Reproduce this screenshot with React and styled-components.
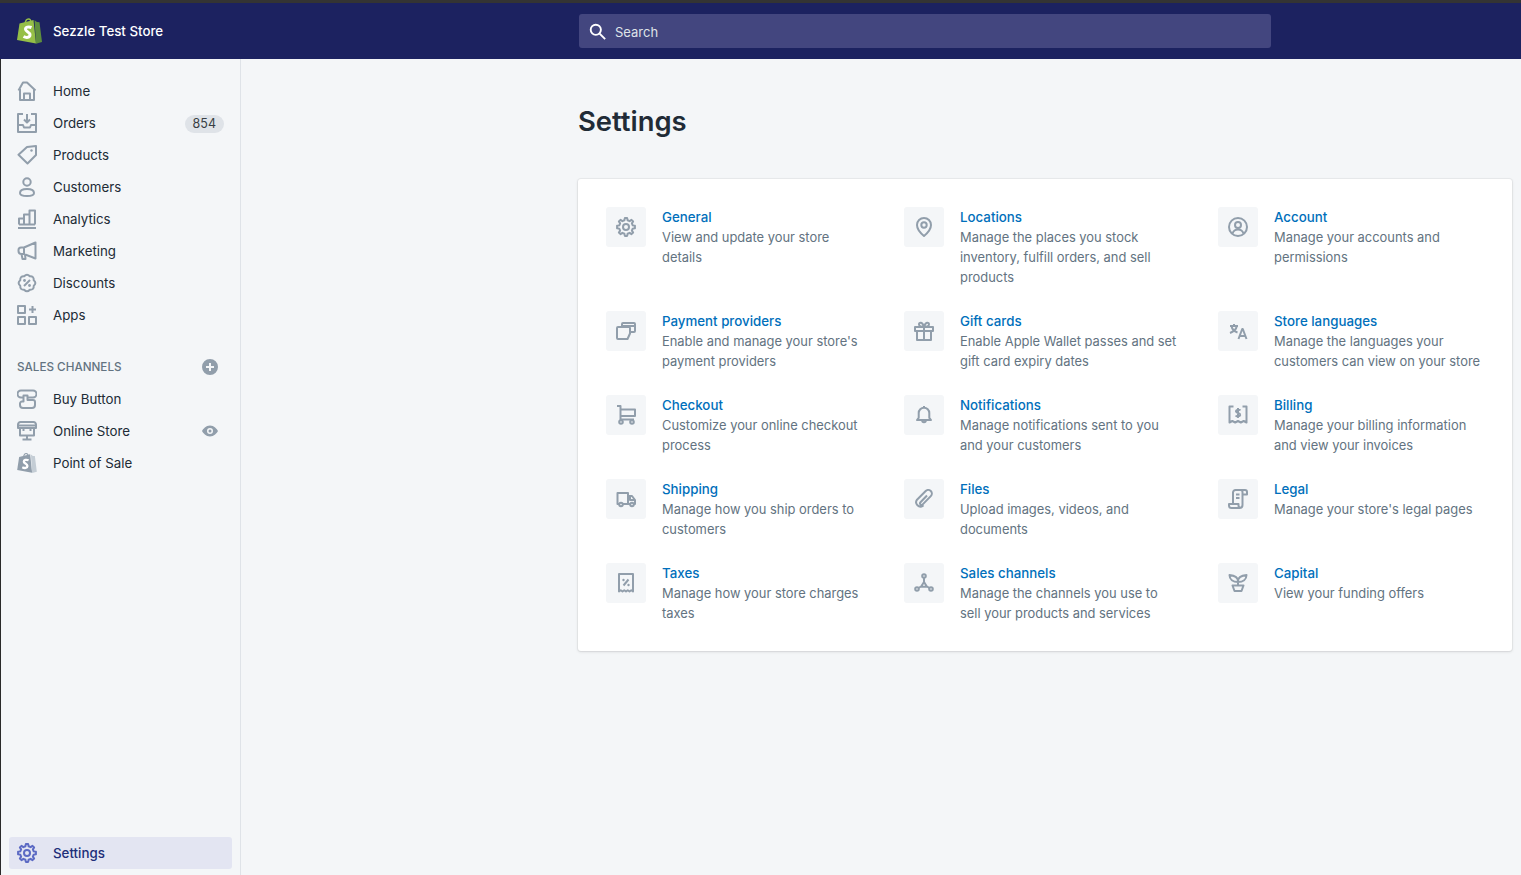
import React from "react";
import styled, { createGlobalStyle } from "styled-components";

const GlobalStyle = createGlobalStyle`
  html, body {
    margin: 0;
    height: 100%;
    overflow: hidden;
    background: #f4f6f8;
  }
  body {
    font-family: Inter, "Noto Sans", "Liberation Sans", sans-serif;
    font-size: 13.3px;
    line-height: 20px;
    color: #212b36;
  }
  * { box-sizing: border-box; }
`;

const ring = (count, outer, inner, spread) => {
  const pts = [];
  const step = (Math.PI * 2) / count;
  for (let i = 0; i < count; i++) {
    const a = i * step - Math.PI / 2;
    [[-spread, inner], [-spread * 0.55, outer], [spread * 0.55, outer], [spread, inner]].forEach(([d, r]) => {
      pts.push(`${(10 + Math.cos(a + d * step) * r).toFixed(2)} ${(10 + Math.sin(a + d * step) * r).toFixed(2)}`);
    });
  }
  return `M${pts.join("L")}Z`;
};

// wavy outline of the discount badge
const wavy = (count, outer, inner) => {
  const step = (Math.PI * 2) / count;
  const at = (a, r) => `${(10 + Math.cos(a) * r).toFixed(2)} ${(10 + Math.sin(a) * r).toFixed(2)}`;
  let d = `M${at(-Math.PI / 2 - step / 2, inner)}`;
  for (let i = 0; i < count; i++) {
    const a = i * step - Math.PI / 2;
    d += `Q${at(a, outer + 1.2)} ${at(a + step / 2, inner)}`;
  }
  return `${d}Z`;
};

const ICONS = {
  home: <path d="M1.500 9.500 6 1.500h4l8.500 8M3 8v11h14V8M7 19v-6.500h6V19" />,
  orders: <path d="M6 1H1v18h18V1h-5M10 1v8.500M7 6.500l3 3 3-3M1 12h5l1 2.500h6l1-2.500h5" />,
  products: (
    <>
      <path d="M1.500 9.800 10 2l9-1v9l-8.500 8.500z" />
      <circle cx="14.500" cy="5.500" r="1.200" fill="currentColor" stroke="none" />
    </>
  ),
  customers: (
    <>
      <circle cx="10" cy="5" r="3.700" />
      <path d="M3 16c0-2.600 3-4 7-4s7 1.400 7 4c0 2-2.500 3-7 3s-7-1-7-3z" />
    </>
  ),
  analytics: <path d="M1 19h18M2 15.500V9.500h5v6M7 15.500v-10h5.500v10M12.500 15.500V1.500H18v14M2 15.500h16" />,
  marketing: <path d="M18.500 1.500 7 6.500H4Q1.500 6.500 1.500 9v1Q1.500 13 4.500 13H7l11.500 4.500zM7 6.500V13M4.500 13l1 5h3L8 13.500" />,
  discounts: (
    <>
      <path d={wavy(8, 8.800, 7.300)} />
      <path d="M13 7l-6 6" />
      <circle cx="7.500" cy="7.500" r="1.400" fill="currentColor" stroke="none" />
      <circle cx="12.500" cy="12.500" r="1.400" fill="currentColor" stroke="none" />
    </>
  ),
  apps: <path d="M1 1h7v7H1zM1 12h7v7H1zM12 12h7v7h-7zM15.500 1v7M12 4.500h7" />,
  buyButton: <path d="M6.500 8.500H4a3.500 3.500 0 0 1 0-7h12a3.500 3.500 0 0 1 0 7h-5.500v2.500H16a2 2 0 0 1 2 2V16a3 3 0 0 1-3 3H6a3 3 0 0 1-3-3v-1.500a2 2 0 0 1 2-2h1.500V6.500h4v2" />,
  store: <path d="M1 7V3.500A2.500 2.500 0 0 1 3.500 1h13A2.500 2.500 0 0 1 19 3.500V7zM3 7v7.500h14V7M1 4.500h18M6.500 7V10M13.500 7V10M10 14.500v3.500M5.500 18.500h9" />,
  gear: (
    <>
      <path d={ring(8, 9, 6.900, 0.3)} />
      <circle cx="10" cy="10" r="3" />
    </>
  ),
  payment: <path d="M6 6V3A1 1 0 0 1 7 2h11a1 1 0 0 1 1 1v7a1 1 0 0 1-1 1h-4M6 6h7a1 1 0 0 1 1 1v5.500L11.500 18H2a1 1 0 0 1-1-1V7a1 1 0 0 1 1-1zM7 5h12" />,
  checkout: (
    <>
      <path d="M1 1h3.500v13.500H18M4.500 4.500H19V11H4.500" />
      <circle cx="5" cy="17" r="1.800" />
      <circle cx="16" cy="17" r="1.800" />
    </>
  ),
  shipping: (
    <>
      <path d="M3 15H1.500V4h10.500v11H7M12 7h4l3 4v4h-1M12 15h2M14 7v4h5" />
      <circle cx="5" cy="15.500" r="1.800" />
      <circle cx="16" cy="15.500" r="1.800" />
    </>
  ),
  taxes: (
    <>
      <path d="M3 1h14v17.500l-1.750-1.200-1.750 1.200-1.750-1.200-1.750 1.200-1.750-1.200-1.750 1.200-1.750-1.200L3 18.500z" />
      <path d="M12.500 6.500l-5 6" />
      <circle cx="7.500" cy="7" r="1.200" fill="currentColor" stroke="none" />
      <circle cx="12.500" cy="12" r="1.200" fill="currentColor" stroke="none" />
    </>
  ),
  location: (
    <>
      <path d="M10 1a7 7 0 0 1 7 7c0 4.500-4 8.500-7 11-3-2.500-7-6.500-7-11a7 7 0 0 1 7-7z" />
      <circle cx="10" cy="8" r="2.700" />
    </>
  ),
  gift: <path d="M1 6h18v4H1zM3 10v9h14v-9M10 6v13M10 6C7 6 5 5 5 3.300 5 1.300 8.500.500 10 6c1.500-5.500 5-4.700 5-2.700C15 5 13 6 10 6z" />,
  bell: <path d="M3 15h14l-1.700-2.200V8a5.300 5.300 0 0 0-10.600 0v4.800zM10 1v1.700M8.200 15.500a1.800 1.800 0 0 0 3.600 0" />,
  clip: <path d="M13 6.500l-6.500 6.800a1.500 1.500 0 0 0 2.200 2.100l8.100-8.300a3.600 3.600 0 0 0-5.100-5.100L3 10.700a4.300 4.300 0 0 0 6 6l.5-.5" />,
  channels: (
    <>
      <circle cx="10" cy="3" r="1.800" />
      <circle cx="3" cy="16" r="1.800" />
      <circle cx="17" cy="16" r="1.800" />
      <path d="M10 5v4M7 13.500l-2.500 1.500M13 13.500l2.500 1.500M10 9l3 4.800H7z" />
    </>
  ),
  account: (
    <>
      <circle cx="10" cy="10" r="9" />
      <circle cx="10" cy="8" r="3" />
      <path d="M4.500 16.500c1-3 3-4 5.500-4s4.500 1 5.500 4" />
    </>
  ),
  languages: <path d="M2 5h8M6 3v2M3.500 5c.5 3 3 5.500 6 6.500M8.800 5C8.300 8 6 10.500 2 12M10.500 18l3.700-10h.6l3.700 10M11.800 15h5.400" />,
  billing: <path d="M5.500 1.500H1.500v16l2.800-1.500 2.900 1.500 2.800-1.500 2.800 1.500 2.900-1.500 2.800 1.500v-16h-4M12.300 5.500c-.5-1-3.800-1.300-4.300.5-.500 2.300 4.500 1.700 4.200 4-.3 1.800-3.800 1.700-4.500.500M10 3v10" />,
  legal: <path d="M5 15V3.500A2.500 2.500 0 0 1 7.500 1H17a2 2 0 0 1 2 2v2.500h-4.500V3a2 2 0 0 0-2-2M14.500 5.500V16a3 3 0 0 1-3 3H3.500A2.500 2.500 0 0 1 1 16.500V15h9.500v1.500a2.500 2.500 0 0 0 2 2.500M8 5.500h3.500M8 9h3.500" />,
  capital: <path d="M10 12.500V8C10 4.500 6 2.500 1.500 2c0 4.500 3.500 7 8.500 7s8.500-2.500 8.500-7C14 2.500 10 4.500 10 8M4.500 12.500h11L13.500 18h-7z" />,
};

const Svg = styled.svg`
  display: block;
  width: ${(p) => p.$size || 20}px;
  height: ${(p) => p.$size || 20}px;
  flex: none;
  fill: none;
  stroke: currentColor;
  stroke-width: ${(p) => p.$weight || 2};
  stroke-linejoin: round;
  color: ${(p) => p.$color || "#919eab"};
`;

const Icon = ({ name, color, weight }) => (
  <Svg viewBox="0 0 20 20" $color={color} $weight={weight}>
    {ICONS[name]}
  </Svg>
);

const ShopBag = ({ plain }) => (
  <svg width={plain ? 20 : 25} height={plain ? 22 : 28} viewBox="0 0 25 28">
    <path d="M2.500 6.500 16.500 3 19 26.500 0 23z" fill={plain ? "#919eab" : "#95bf47"} />
    <path d="M17.500 3.300 20 5l2.500.2L25 25l-6 1.800z" fill={plain ? "#c4cdd5" : "#5e8e3e"} />
    <path d="M8 7.500c.2-3 1.700-5.500 3.500-5.500s2.500 1.500 2.500 4" fill="none" stroke={plain ? "#919eab" : "#95bf47"} strokeWidth="1.400" />
    <path d="M14.500 10.500c-3-1.200-6-.3-6 1.800s4.500 2.800 4.500 5.500c0 2.800-3.500 3.300-6.500 1.700" fill="none" stroke="#fff" strokeWidth="3" />
  </svg>
);

const Page = styled.div`
  height: 100vh;
  display: flex;
  flex-direction: column;
  border-top: 3px solid #343434;
`;

const TopBar = styled.header`
  flex: none;
  height: 56px;
  background: #1c2260;
  display: flex;
  align-items: center;
`;

const Brand = styled.div`
  width: 579px;
  flex: none;
  display: flex;
  align-items: center;
  gap: 11px;
  padding-left: 17px;
  color: #fff;
  font-weight: 500;
`;

const SearchBox = styled.div`
  width: 692px;
  height: 34px;
  background: #43467f;
  border-radius: 3px;
  display: flex;
  align-items: center;
  gap: 9px;
  padding-left: 10px;
  color: #dfe3e8;
  font-size: 13px;
`;

const SearchLabel = styled.span`
  margin-top: 2px;
`;

const Shell = styled.div`
  flex: 1;
  min-height: 0;
  display: flex;
  border-left: 1px solid #2a2a2a;
`;

const Sidebar = styled.nav`
  width: 240px;
  flex: none;
  display: flex;
  flex-direction: column;
  padding: 16px 8px 6px;
  border-right: 1px solid #dfe3e8;
`;

const NavRow = styled.div`
  height: 32px;
  display: flex;
  align-items: center;
  gap: 16px;
  padding: 0 8px;
  border-radius: 3px;
  color: ${(p) => (p.$active ? "#202e78" : "#212b36")};
  background: ${(p) => (p.$active ? "#e3e5f2" : "transparent")};
  font-weight: ${(p) => (p.$active ? 500 : 400)};
`;

const NavLabel = styled.span`
  flex: 1;
`;

const Badge = styled.span`
  height: 18px;
  margin-top: 2px;
  padding: 0 8px;
  border-radius: 9px;
  background: #dfe3e8;
  font-size: 12.5px;
  line-height: 18px;
  color: #393f45;
`;

const RowAction = styled.svg`
  width: 16px;
  height: 16px;
  margin-right: 6px;
  flex: none;
  fill: #919eab;
`;

const ChannelHeading = styled.div`
  height: 32px;
  margin-top: 20px;
  padding: 0 8px;
  display: flex;
  align-items: center;
  justify-content: space-between;
  font-size: 11.7px;
  font-weight: 500;
  color: #637381;
`;

const SettingsRow = styled(NavRow)`
  margin-top: auto;
`;

const Main = styled.main`
  flex: 1;
  min-width: 0;
  padding: 44px 9px 0 337px;
`;

const Title = styled.h1`
  margin: 0 0 40px;
  font-size: 27.4px;
  line-height: 36px;
  font-weight: 600;
  color: #212b36;
`;

const Card = styled.section`
  background: #fff;
  border-radius: 3px;
  box-shadow: 0 0 0 1px rgba(63, 63, 68, 0.05), 0 1px 3px 0 rgba(63, 63, 68, 0.15);
  padding: 28px 28px 27px;
  display: grid;
  grid-template-columns: 298px 314px 1fr;
  row-gap: 23px;
`;

const Item = styled.a`
  display: flex;
  gap: 16px;
  align-items: flex-start;
`;

const Tile = styled.div`
  width: 40px;
  height: 40px;
  flex: none;
  border-radius: 3px;
  background: #f4f6f8;
  display: flex;
  align-items: center;
  justify-content: center;
`;

const ItemText = styled.div`
  width: ${(p) => p.$width}px;
`;

const ItemTitle = styled.div`
  color: #006fbb;
  font-weight: 500;
  margin-bottom: 1px;
`;

const ItemDesc = styled.div`
  color: #637381;
  font-size: 12.9px;
`;

const MAIN_NAV = [
  ["home", "Home"],
  ["orders", "Orders", "854"],
  ["products", "Products"],
  ["customers", "Customers"],
  ["analytics", "Analytics"],
  ["marketing", "Marketing"],
  ["discounts", "Discounts"],
  ["apps", "Apps"],
];

const SETTINGS = [
  ["gear", "General", "View and update your store details"],
  ["location", "Locations", "Manage the places you stock inventory, fulfill orders, and sell products"],
  ["account", "Account", "Manage your accounts and permissions"],
  ["payment", "Payment providers", "Enable and manage your store's payment providers"],
  ["gift", "Gift cards", "Enable Apple Wallet passes and set gift card expiry dates"],
  ["languages", "Store languages", "Manage the languages your customers can view on your store"],
  ["checkout", "Checkout", "Customize your online checkout process"],
  ["bell", "Notifications", "Manage notifications sent to you and your customers"],
  ["billing", "Billing", "Manage your billing information and view your invoices"],
  ["shipping", "Shipping", "Manage how you ship orders to customers"],
  ["clip", "Files", "Upload images, videos, and documents"],
  ["legal", "Legal", "Manage your store's legal pages"],
  ["taxes", "Taxes", "Manage how your store charges taxes"],
  ["channels", "Sales channels", "Manage the channels you use to sell your products and services"],
  ["capital", "Capital", "View your funding offers"],
];

const TEXT_WIDTHS = [200, 219, 210];

export default function App() {
  return (
    <Page>
      <GlobalStyle />
      <TopBar>
        <Brand>
          <ShopBag />
          Sezzle Test Store
        </Brand>
        <SearchBox>
          <Svg viewBox="0 0 20 20" $color="#fff" $weight={2.2} $size={17}>
            <circle cx="8" cy="8" r="6" />
            <path d="M12.500 12.500 19 19" />
          </Svg>
          <SearchLabel>Search</SearchLabel>
        </SearchBox>
      </TopBar>
      <Shell>
        <Sidebar>
          {MAIN_NAV.map(([icon, label, count]) => (
            <NavRow key={label}>
              <Icon name={icon} />
              <NavLabel>{label}</NavLabel>
              {count && <Badge>{count}</Badge>}
            </NavRow>
          ))}
          <ChannelHeading>
            SALES CHANNELS
            <RowAction viewBox="0 0 16 16">
              <path fillRule="evenodd" d="M8 0a8 8 0 1 1 0 16A8 8 0 0 1 8 0zM7 4v3H4v2h3v3h2V9h3V7H9V4z" />
            </RowAction>
          </ChannelHeading>
          <NavRow>
            <Icon name="buyButton" />
            <NavLabel>Buy Button</NavLabel>
          </NavRow>
          <NavRow>
            <Icon name="store" />
            <NavLabel>Online Store</NavLabel>
            <RowAction viewBox="0 0 16 16">
              <path fillRule="evenodd" d="M8 2.500c4 0 7 3.500 8 5.500-1 2-4 5.500-8 5.500S1 10 0 8c1-2 4-5.500 8-5.500zM8 5a3 3 0 1 0 0 6 3 3 0 0 0 0-6zm0 1.500a1.500 1.500 0 1 1 0 3 1.500 1.500 0 0 1 0-3z" />
            </RowAction>
          </NavRow>
          <NavRow>
            <ShopBag plain />
            <NavLabel>Point of Sale</NavLabel>
          </NavRow>
          <SettingsRow $active>
            <Icon name="gear" color="#5c6ac4" />
            <NavLabel>Settings</NavLabel>
          </SettingsRow>
        </Sidebar>
        <Main>
          <Title>Settings</Title>
          <Card>
            {SETTINGS.map(([icon, title, desc], i) => (
              <Item key={title}>
                <Tile>
                  <Icon name={icon} />
                </Tile>
                <ItemText $width={TEXT_WIDTHS[i % 3]}>
                  <ItemTitle>{title}</ItemTitle>
                  <ItemDesc>{desc}</ItemDesc>
                </ItemText>
              </Item>
            ))}
          </Card>
        </Main>
      </Shell>
    </Page>
  );
}
